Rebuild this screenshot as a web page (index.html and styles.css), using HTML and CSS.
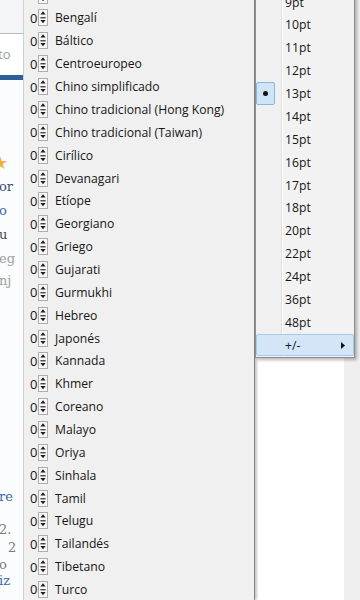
FILE: index.html
```html
<!DOCTYPE html>
<html>
<head>
<meta charset="utf-8">
<link rel="stylesheet" href="styles.css">
</head>
<body>
<svg class="defs" width="0" height="0" aria-hidden="true">
  <defs>
    <symbol id="spin" viewBox="0 0 10 17">
      <rect x="0.5" y="0.5" width="9" height="16" fill="#f7f7f7" stroke="#adadad"/>
      <path d="M5 2.3L7.6 5.6H2.4Z" fill="#1e1e1e"/>
      <rect x="2.4" y="8.1" width="5.2" height="1.3" fill="#3a3a3a"/>
      <path d="M2.4 11H7.6L5 14.3Z" fill="#1e1e1e"/>
    </symbol>
  </defs>
</svg>
<div class="screen">
  <div class="strip">
    <div class="s-top"></div>
    <div class="s-search">to</div>
    <div class="s-bar"></div>
    <div class="s-gap1"></div>
    <div class="f f-star">★</div>
    <div class="f f-navy">or</div>
    <div class="f f-blue">o</div>
    <div class="f f-dark">u</div>
    <div class="f f-grey h23">eg</div>
    <div class="f f-grey h22">nj</div>
    <div class="s-gap2"></div>
    <div class="f f-blue">re</div>
    <div class="s-gap3"></div>
    <div class="f f-mid h20">2.</div>
    <div class="f f-mid h16 ind">2</div>
    <div class="f f-mid h18">o</div>
    <div class="f f-blue h14">iz</div>
  </div>

  <div class="langmenu">
    <div class="langlist">
      <div class="lrow"><span class="num">0</span><svg class="spin"><use href="#spin"/></svg><span class="ltxt">Armenio</span></div>
      <div class="lrow"><span class="num">0</span><svg class="spin"><use href="#spin"/></svg><span class="ltxt">Bengalí</span></div>
      <div class="lrow"><span class="num">0</span><svg class="spin"><use href="#spin"/></svg><span class="ltxt">Báltico</span></div>
      <div class="lrow"><span class="num">0</span><svg class="spin"><use href="#spin"/></svg><span class="ltxt">Centroeuropeo</span></div>
      <div class="lrow"><span class="num">0</span><svg class="spin"><use href="#spin"/></svg><span class="ltxt">Chino simplificado</span></div>
      <div class="lrow"><span class="num">0</span><svg class="spin"><use href="#spin"/></svg><span class="ltxt">Chino tradicional (Hong Kong)</span></div>
      <div class="lrow"><span class="num">0</span><svg class="spin"><use href="#spin"/></svg><span class="ltxt">Chino tradicional (Taiwan)</span></div>
      <div class="lrow"><span class="num">0</span><svg class="spin"><use href="#spin"/></svg><span class="ltxt">Cirílico</span></div>
      <div class="lrow"><span class="num">0</span><svg class="spin"><use href="#spin"/></svg><span class="ltxt">Devanagari</span></div>
      <div class="lrow"><span class="num">0</span><svg class="spin"><use href="#spin"/></svg><span class="ltxt">Etíope</span></div>
      <div class="lrow"><span class="num">0</span><svg class="spin"><use href="#spin"/></svg><span class="ltxt">Georgiano</span></div>
      <div class="lrow"><span class="num">0</span><svg class="spin"><use href="#spin"/></svg><span class="ltxt">Griego</span></div>
      <div class="lrow"><span class="num">0</span><svg class="spin"><use href="#spin"/></svg><span class="ltxt">Gujarati</span></div>
      <div class="lrow"><span class="num">0</span><svg class="spin"><use href="#spin"/></svg><span class="ltxt">Gurmukhi</span></div>
      <div class="lrow"><span class="num">0</span><svg class="spin"><use href="#spin"/></svg><span class="ltxt">Hebreo</span></div>
      <div class="lrow"><span class="num">0</span><svg class="spin"><use href="#spin"/></svg><span class="ltxt">Japonés</span></div>
      <div class="lrow"><span class="num">0</span><svg class="spin"><use href="#spin"/></svg><span class="ltxt">Kannada</span></div>
      <div class="lrow"><span class="num">0</span><svg class="spin"><use href="#spin"/></svg><span class="ltxt">Khmer</span></div>
      <div class="lrow"><span class="num">0</span><svg class="spin"><use href="#spin"/></svg><span class="ltxt">Coreano</span></div>
      <div class="lrow"><span class="num">0</span><svg class="spin"><use href="#spin"/></svg><span class="ltxt">Malayo</span></div>
      <div class="lrow"><span class="num">0</span><svg class="spin"><use href="#spin"/></svg><span class="ltxt">Oriya</span></div>
      <div class="lrow"><span class="num">0</span><svg class="spin"><use href="#spin"/></svg><span class="ltxt">Sinhala</span></div>
      <div class="lrow"><span class="num">0</span><svg class="spin"><use href="#spin"/></svg><span class="ltxt">Tamil</span></div>
      <div class="lrow"><span class="num">0</span><svg class="spin"><use href="#spin"/></svg><span class="ltxt">Telugu</span></div>
      <div class="lrow"><span class="num">0</span><svg class="spin"><use href="#spin"/></svg><span class="ltxt">Tailandés</span></div>
      <div class="lrow"><span class="num">0</span><svg class="spin"><use href="#spin"/></svg><span class="ltxt">Tibetano</span></div>
      <div class="lrow"><span class="num">0</span><svg class="spin"><use href="#spin"/></svg><span class="ltxt">Turco</span></div>
      <div class="lrow"><span class="num">0</span><svg class="spin"><use href="#spin"/></svg><span class="ltxt">Urdu</span></div>
    </div>
  </div>

  <div class="rightcol">
    <div class="sizemenu">
      <div class="srow"><span class="check"></span><span>9pt</span></div>
      <div class="srow"><span class="check"></span><span>10pt</span></div>
      <div class="srow"><span class="check"></span><span>11pt</span></div>
      <div class="srow"><span class="check"></span><span>12pt</span></div>
      <div class="srow"><span class="check on"><span class="dot"></span></span><span>13pt</span></div>
      <div class="srow"><span class="check"></span><span>14pt</span></div>
      <div class="srow"><span class="check"></span><span>15pt</span></div>
      <div class="srow"><span class="check"></span><span>16pt</span></div>
      <div class="srow"><span class="check"></span><span>17pt</span></div>
      <div class="srow"><span class="check"></span><span>18pt</span></div>
      <div class="srow"><span class="check"></span><span>20pt</span></div>
      <div class="srow"><span class="check"></span><span>22pt</span></div>
      <div class="srow"><span class="check"></span><span>24pt</span></div>
      <div class="srow"><span class="check"></span><span>36pt</span></div>
      <div class="srow"><span class="check"></span><span>48pt</span></div>
      <div class="srow hot"><span class="check"></span><span>+/-</span><svg class="arrow" width="4" height="7" viewBox="0 0 4 7"><path d="M0 0L4 3.5L0 7Z" fill="#111"/></svg></div>
    </div>
  </div>
</div>
</body>
</html>
```

FILE: styles.css
```css
html, body {
  margin: 0;
  padding: 0;
}
body {
  width: 360px;
  height: 600px;
  overflow: hidden;
  background: #ffffff;
}
.defs {
  display: block;
  width: 0;
  height: 0;
  overflow: hidden;
}
.screen {
  display: flex;
  width: 360px;
  height: 600px;
  overflow: hidden;
}

/* page behind, left strip */
.strip {
  flex: none;
  width: 23px;
  background: #fbfcfd;
  display: flex;
  flex-direction: column;
  overflow: hidden;
  font-family: "DejaVu Serif", "Liberation Serif", serif;
  font-size: 13px;
}
.s-top { height: 33px; flex: none; background: #f3f5f7; }
.s-search {
  height: 41px;
  flex: none;
  border-top: 1px solid #b9bcc0;
  background: #fff;
  color: #9a9a9a;
  font-family: "Open Sans", sans-serif;
  font-size: 13px;
  line-height: 40px;
  text-indent: -2px;
}
.s-bar { height: 5px; flex: none; background: #2e5f99; }
.s-gap1 { height: 71px; flex: none; }
.s-gap2 { height: 193px; flex: none; }
.s-gap3 { height: 11px; flex: none; }
.f {
  flex: none;
  height: 24px;
  line-height: 24px;
  white-space: nowrap;
  text-indent: -1px;
}
.h23 { height: 23px; line-height: 23px; }
.h22 { height: 22px; line-height: 22px; }
.h20 { height: 20px; line-height: 20px; }
.h18 { height: 18px; line-height: 18px; }
.h16 { height: 16px; line-height: 16px; }
.h14 { height: 14px; line-height: 14px; }
.ind { text-indent: 8px; }
.f-star { color: #f2b233; font-size: 18px; text-indent: -8px; font-family: "DejaVu Sans", sans-serif; }
.f-navy { color: #3b4c6e; }
.f-blue { color: #3a68a8; }
.f-dark { color: #4a4a4a; }
.f-grey { color: #a0a0a0; }
.f-mid { color: #7a7a7a; }

/* language menu */
.langmenu {
  flex: none;
  position: relative;
  z-index: 1;
  box-sizing: border-box;
  width: 232px;
  background: #f0f0f0;
  border-left: 1px solid #cfcfcf;
  border-right: 1px solid #858585;
  box-shadow: 2px 0 2px rgba(0, 0, 0, 0.22);
  overflow: hidden;
  font-family: "Open Sans", sans-serif;
  font-size: 12.2px;
  color: #161616;
}
.langlist {
  margin-top: -16.3px;
}
.lrow {
  height: 22.86px;
  display: flex;
  align-items: center;
  padding-left: 6px;
  white-space: nowrap;
}
.num {
  width: 8px;
  margin-right: 0;
  font-size: 13px;
}
.spin {
  flex: none;
  width: 10px;
  height: 17px;
  margin-right: 7px;
}

/* size menu */
.rightcol {
  flex: none;
  width: 105px;
  display: flex;
  flex-direction: column;
  background: linear-gradient(to right, #ffffff 0 89px, #efefef 89px);
}
.sizemenu {
  position: relative;
  z-index: 2;
  box-sizing: border-box;
  width: 100px;
  margin-top: -10.3px;
  padding-bottom: 1px;
  border: 1px solid #8f8f8f;
  background: linear-gradient(to right, #f0f0f0 0 25px, #e0e0e0 25px 26px, #ffffff 26px 27px, #f2f2f2 27px);
  box-shadow: 2px 2px 3px rgba(0, 0, 0, 0.28);
  font-family: "Open Sans", sans-serif;
  font-size: 12.2px;
  color: #161616;
}
.srow {
  box-sizing: border-box;
  height: 22.86px;
  display: flex;
  align-items: center;
  white-space: nowrap;
}
.check {
  flex: none;
  box-sizing: border-box;
  width: 19px;
  height: 100%;
  margin-right: 10px;
  display: flex;
  align-items: center;
  justify-content: center;
}
.check.on {
  background: #cfe5f6;
  border: 1px solid #86b8e2;
  border-radius: 2px;
}
.dot {
  width: 5px;
  height: 5px;
  border-radius: 50%;
  background: #111;
}
.srow.hot {
  background: #d3e5f6;
  border: 1px solid #a5cbec;
  border-radius: 2px;
}
.srow.hot .check {
  margin-left: -1px;
}
.arrow {
  margin-left: auto;
  margin-right: 8px;
}
```
